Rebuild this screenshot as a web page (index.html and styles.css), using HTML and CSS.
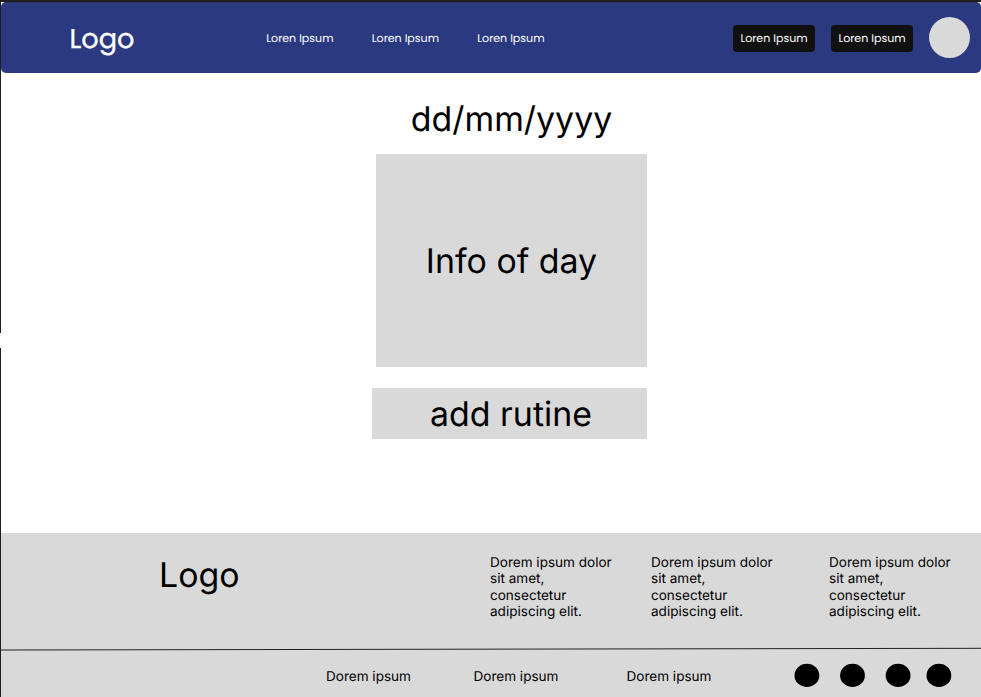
FILE: index.html
```html
<!DOCTYPE html>
<html lang="en">
<head>
<meta charset="utf-8">
<title>Day view</title>
<link rel="stylesheet" href="styles.css">
</head>
<body>
<div class="canvas">
  <div class="edge"><span></span><span></span></div>
  <div class="page">
    <header class="header">
      <div class="brand">Logo</div>
      <nav class="nav"><a>Loren Ipsum</a><a>Loren Ipsum</a><a>Loren Ipsum</a></nav>
      <div class="actions">
        <button>Loren Ipsum</button>
        <button>Loren Ipsum</button>
        <div class="avatar"></div>
      </div>
    </header>
    <main class="main">
      <h1 class="date">dd/mm/yyyy</h1>
      <section class="info">Info of day</section>
      <button class="add">add rutine</button>
    </main>
    <footer class="footer">
      <div class="footer-top">
        <div class="footer-logo">Logo</div>
        <p>Dorem ipsum dolor sit amet, consectetur adipiscing elit.</p>
        <p>Dorem ipsum dolor sit amet, consectetur adipiscing elit.</p>
        <p>Dorem ipsum dolor sit amet, consectetur adipiscing elit.</p>
      </div>
      <svg class="rule" width="980" height="4" viewBox="0 0 980 4"><path d="M0 3L980 1.3" stroke="#000" stroke-width=".85"/></svg>
      <div class="footer-bottom">
        <a>Dorem ipsum</a><a>Dorem ipsum</a><a>Dorem ipsum</a>
        <svg class="dots" width="157" height="24" viewBox="0 0 157 24"><ellipse cx="11.9" cy="12.4" rx="12.4" ry="11.6"/><ellipse cx="57.5" cy="12.4" rx="12.4" ry="11.6"/><ellipse cx="103.1" cy="12.4" rx="12.4" ry="11.6"/><ellipse cx="143.9" cy="12.4" rx="12.4" ry="11.6"/></svg>
      </div>
    </footer>
  </div>
</div>
</body>
</html>
```
FILE: styles.css
```css
* { box-sizing: border-box; }
body { margin: 0; background: #fff; color: #000; font-family: Inter, sans-serif; overflow: hidden; text-rendering: geometricPrecision; }
h1, p { margin: 0; font-weight: 400; }
button { border: 0; padding: 0; color: inherit; text-rendering: inherit; }
.canvas { display: flex; height: 697px; border-top: 2px solid #1e1e1e; }
.edge { width: 1px; display: flex; flex-direction: column; gap: 15px; }
.edge span { background: #1e1e1e; height: 331px; }
.edge span + span { height: 349px; }
.page { width: 980px; display: flex; flex-direction: column; }
.header {
  height: 71px; display: flex; align-items: center; background: #2a3980;
  border-radius: 5px; color: #fff; font-family: Poppins, Lato, sans-serif;
  border-top: 1px solid #29346c;
}
.brand { width: 265.3px; padding: 2px 0 0 68.6px; font-size: 27.2px; -webkit-text-stroke: .3px #fff; }
.nav { display: flex; gap: 38px; padding-top: 1px; font-size: 11.05px; }
.nav a { width: 67.5px; white-space: nowrap; }
.actions { margin-left: auto; margin-right: 11px; display: flex; align-items: center; gap: 16px; }
.actions button { width: 82px; height: 27px; padding-top: 1px; border-radius: 4px; background: #111; font: 11.05px Poppins, Lato, sans-serif; white-space: nowrap; }
.avatar { width: 41px; height: 41px; margin-top: -1px; border-radius: 50%; background: #d9d9d9; }
.main { height: 460px; padding-left: 371px; display: flex; flex-direction: column; }
.date { margin: 26px 0 13px 4px; width: 271px; height: 42px; line-height: 42px; font-size: 33.9px; text-align: center; }
.info { margin-left: 4px; width: 271px; height: 213px; padding-top: 1px; background: #d9d9d9; font-size: 33.9px; display: flex; align-items: center; justify-content: center; }
.add { margin-top: 21px; width: 275px; height: 51px; padding: 1px 0 0 3px; background: #d9d9d9; font: 33.9px Inter, sans-serif; }
.footer { flex: 1; background: #d9d9d9; font-size: 13.55px; line-height: 16.4px; }
.footer-top { height: 114px; display: grid; grid-template-columns: 330px 161px 178px 130px; padding: 22px 0 0 159px; }
.footer-logo { margin-left: -1px; font-size: 33.9px; line-height: 42px; }
.footer-top p { width: 127px; }
.rule { display: block; }
.footer-bottom { display: flex; align-items: center; padding: 12px 0 0 325px; }
.footer-bottom a { width: 147.5px; padding-top: 4px; }
.footer-bottom a + a { width: 153px; }
.footer-bottom a + a + a { width: 168px; }
.dots { overflow: visible; }
```
